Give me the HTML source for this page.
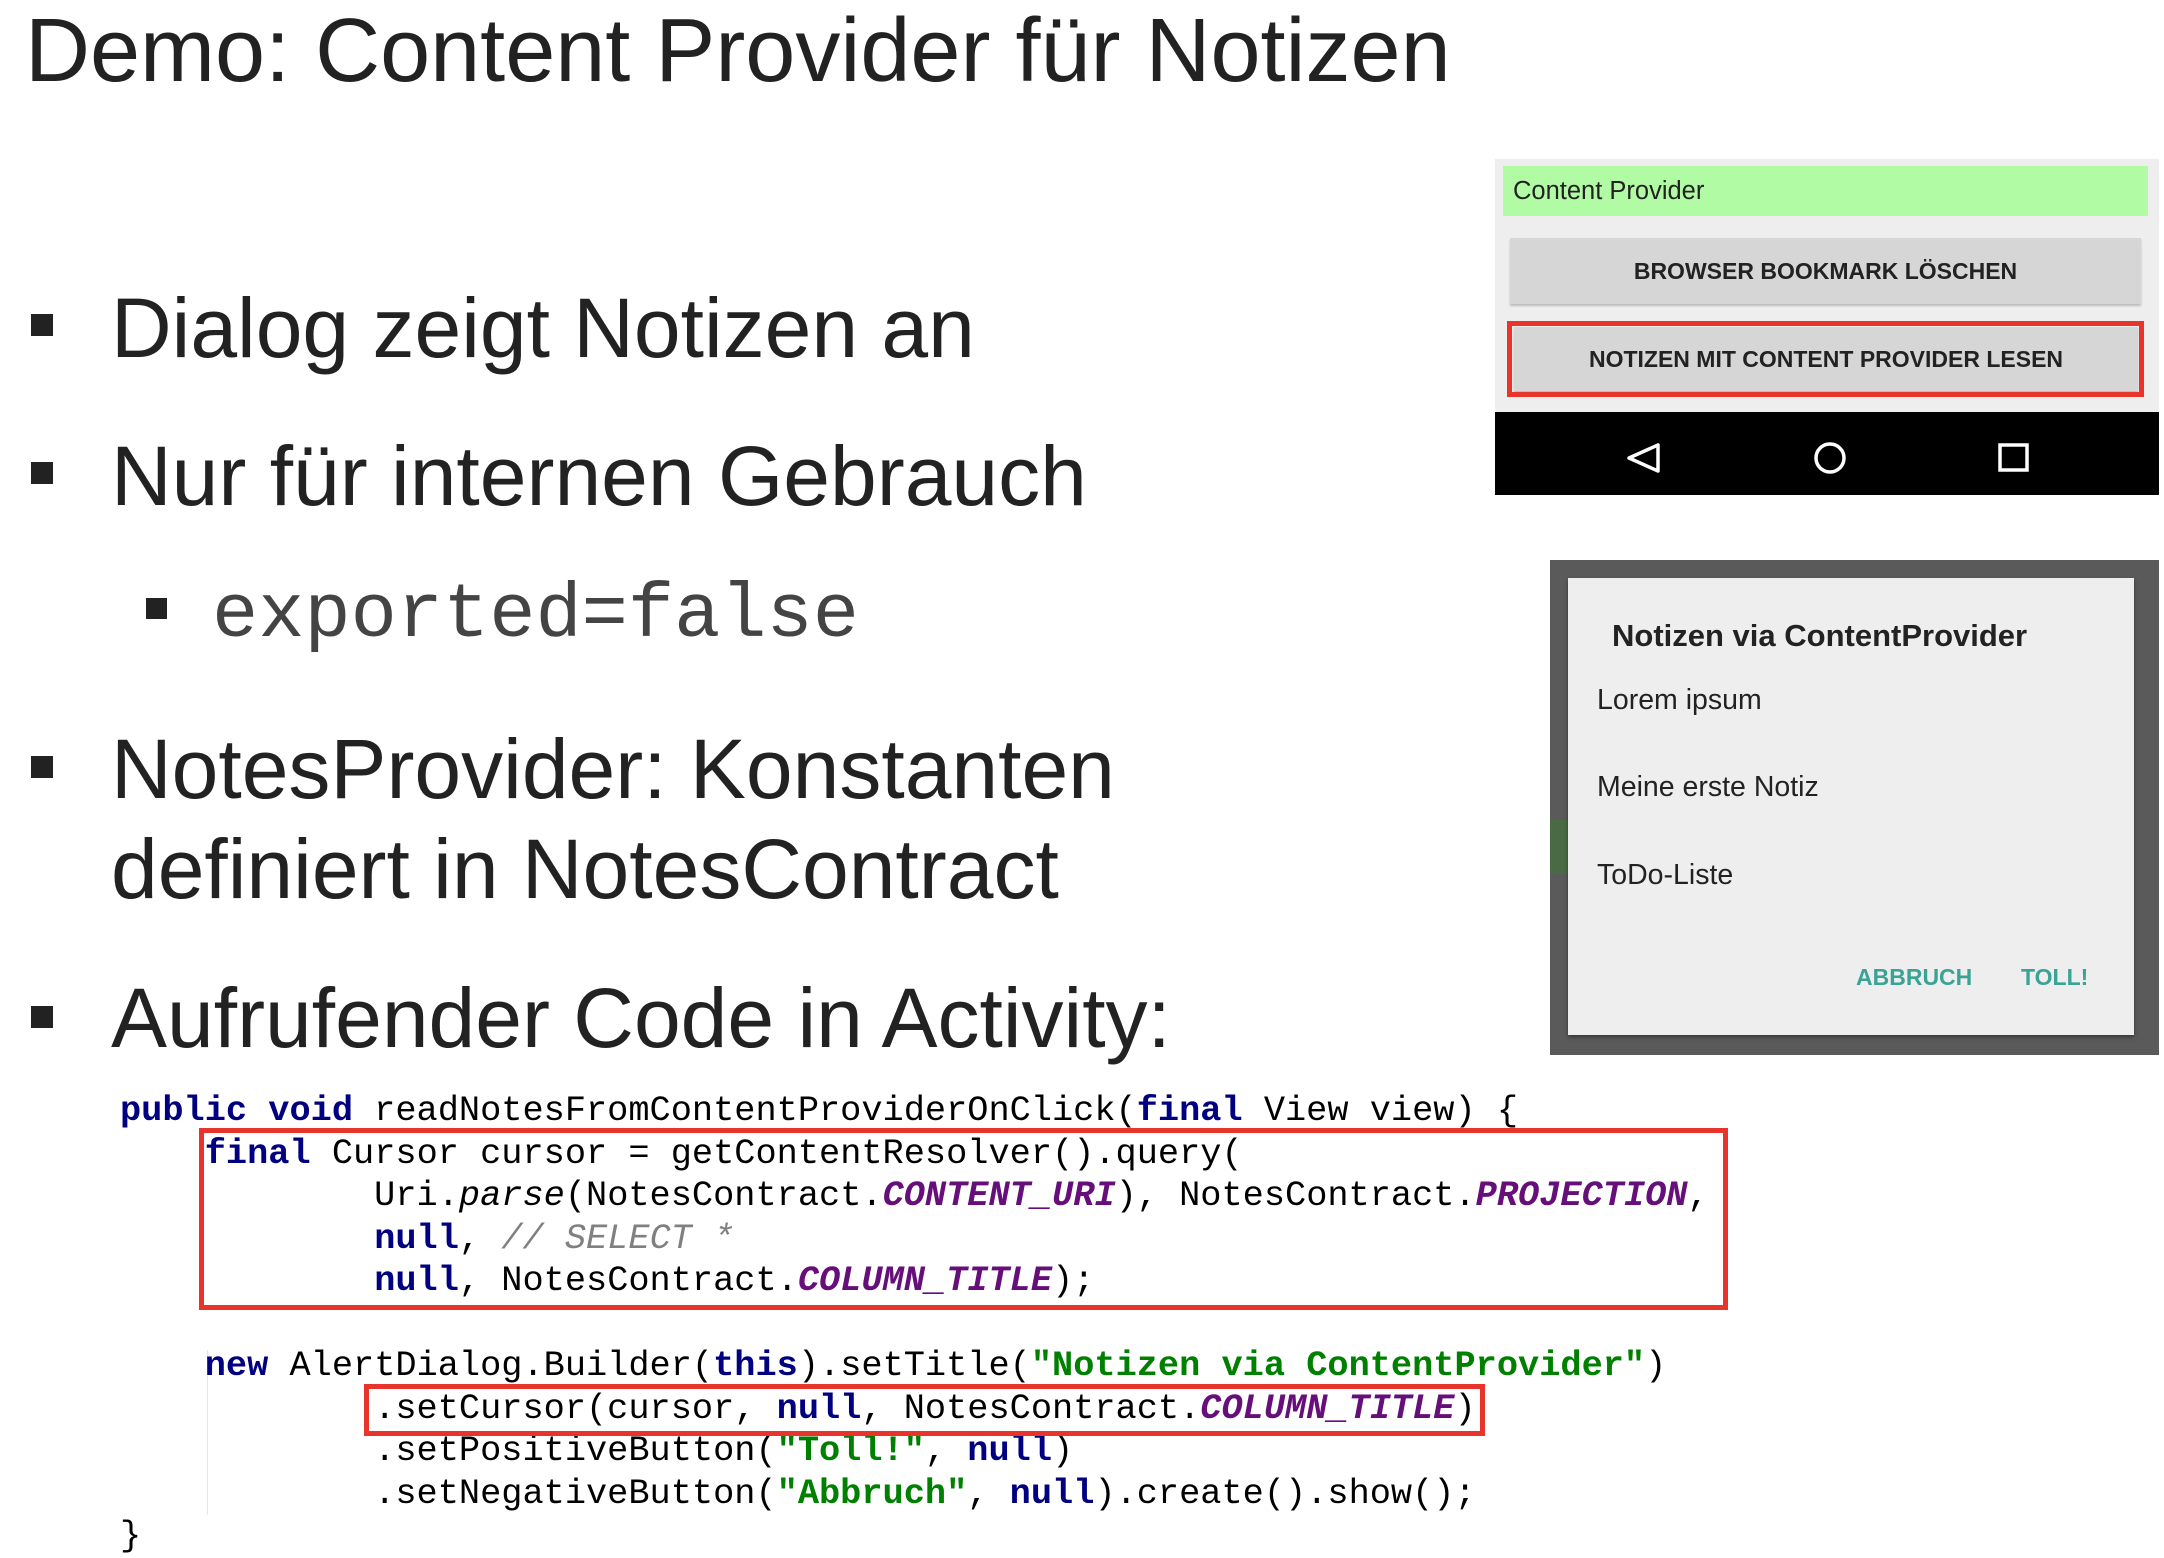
<!DOCTYPE html>
<html><head><meta charset="utf-8"><style>
body{margin:0;width:2164px;height:1554px;background:#fff;position:relative;overflow:hidden;font-family:"Liberation Sans",sans-serif;color:#222}
.a{position:absolute;white-space:nowrap;line-height:1}
.b{position:absolute;background:#222;width:22px;height:22px}
.code{position:absolute;left:120px;top:1090px;font-family:"Liberation Mono",monospace;font-size:35.3px;line-height:42.5px;white-space:pre;color:#000}
.k{color:#000080;font-weight:bold}
.c{color:#660e7a;font-weight:bold;font-style:italic}
.s{color:#008000;font-weight:bold}
.m{color:#808080;font-style:italic}
.rb{position:absolute;border:5px solid #e8342a;box-sizing:border-box}
.btn{position:absolute;background:#d6d6d6;font-size:23px;font-weight:bold;color:#222;text-align:center;box-shadow:0 2px 2px #bbb}
</style></head><body>
<div class="a" style="left:25px;top:6px;font-size:90px">Demo: Content Provider für Notizen</div>

<div class="b" style="left:31px;top:314px"></div>
<div class="a" style="left:111px;top:286px;font-size:84px">Dialog zeigt Notizen an</div>
<div class="b" style="left:31px;top:462px"></div>
<div class="a" style="left:111px;top:434px;font-size:84px">Nur für internen Gebrauch</div>
<div class="b" style="left:146px;top:598px;width:21px;height:21px"></div>
<div class="a" style="left:212px;top:578px;font-size:77px;font-family:'Liberation Mono',monospace;color:#444">exported=false</div>
<div class="b" style="left:31px;top:756px"></div>
<div class="a" style="left:111px;top:727px;font-size:84px">NotesProvider: Konstanten</div>
<div class="a" style="left:111px;top:827px;font-size:84px">definiert in NotesContract</div>
<div class="b" style="left:31px;top:1006px"></div>
<div class="a" style="left:111px;top:976px;font-size:84px">Aufrufender Code in Activity:</div>

<div style="position:absolute;left:207px;top:1350px;width:1px;height:165px;background:#e6e6e6"></div>
<div class="code"><span class="k">public void</span> readNotesFromContentProviderOnClick(<span class="k">final</span> View view) {
    <span class="k">final</span> Cursor cursor = getContentResolver().query(
            Uri.<i>parse</i>(NotesContract.<span class="c">CONTENT_URI</span>), NotesContract.<span class="c">PROJECTION</span>,
            <span class="k">null</span>, <span class="m">// SELECT *</span>
            <span class="k">null</span>, NotesContract.<span class="c">COLUMN_TITLE</span>);

    <span class="k">new</span> AlertDialog.Builder(<span class="k">this</span>).setTitle(<span class="s">"Notizen via ContentProvider"</span>)
            .setCursor(cursor, <span class="k">null</span>, NotesContract.<span class="c">COLUMN_TITLE</span>)
            .setPositiveButton(<span class="s">"Toll!"</span>, <span class="k">null</span>)
            .setNegativeButton(<span class="s">"Abbruch"</span>, <span class="k">null</span>).create().show();
}</div>
<div class="rb" style="left:199px;top:1128px;width:1529px;height:182px"></div>
<div class="rb" style="left:364px;top:1384px;width:1121px;height:52px"></div>

<!-- phone 1 -->
<div style="position:absolute;left:1495px;top:159px;width:664px;height:253px;background:#eeeeee"></div>
<div style="position:absolute;left:1503px;top:166px;width:645px;height:50px;background:#b2fba5"></div>
<div class="a" style="left:1513px;top:179px;font-size:25.5px;color:#222">Content Provider</div>
<div class="btn" style="left:1510px;top:238px;width:631px;height:66px;line-height:66px">BROWSER BOOKMARK LÖSCHEN</div>
<div class="btn" style="left:1514px;top:327px;width:624px;height:64px;line-height:64px">NOTIZEN MIT CONTENT PROVIDER LESEN</div>
<div class="rb" style="left:1507px;top:321px;width:637px;height:76px"></div>
<div style="position:absolute;left:1495px;top:412px;width:664px;height:83px;background:#000"></div>
<svg style="position:absolute;left:1495px;top:412px" width="664" height="83">
<path d="M134 46 L163 33 L163 59 Z" fill="none" stroke="#fff" stroke-width="3.5" stroke-linejoin="round"/>
<circle cx="335" cy="46" r="14" fill="none" stroke="#fff" stroke-width="3.5"/>
<rect x="505" y="33" width="27" height="25" fill="none" stroke="#fff" stroke-width="3.5"/>
</svg>

<!-- dialog -->
<div style="position:absolute;left:1550px;top:560px;width:609px;height:495px;background:#5a5a5a"></div>
<div style="position:absolute;left:1550px;top:820px;width:18px;height:54px;background:#4a6a44"></div>
<div style="position:absolute;left:1568px;top:578px;width:566px;height:457px;background:#eeeeee;box-shadow:0 2px 4px rgba(0,0,0,.4)"></div>
<div class="a" style="left:1612px;top:620px;font-size:31px;font-weight:bold;color:#222">Notizen via ContentProvider</div>
<div class="a" style="left:1597px;top:686px;font-size:28.5px;color:#222">Lorem ipsum</div>
<div class="a" style="left:1597px;top:773px;font-size:28.5px;color:#222">Meine erste Notiz</div>
<div class="a" style="left:1597px;top:861px;font-size:28.5px;color:#222">ToDo-Liste</div>
<div class="a" style="left:1856px;top:966px;font-size:23px;font-weight:bold;color:#3aa395">ABBRUCH</div>
<div class="a" style="left:2021px;top:966px;font-size:23px;font-weight:bold;color:#3aa395">TOLL!</div>
</body></html>
